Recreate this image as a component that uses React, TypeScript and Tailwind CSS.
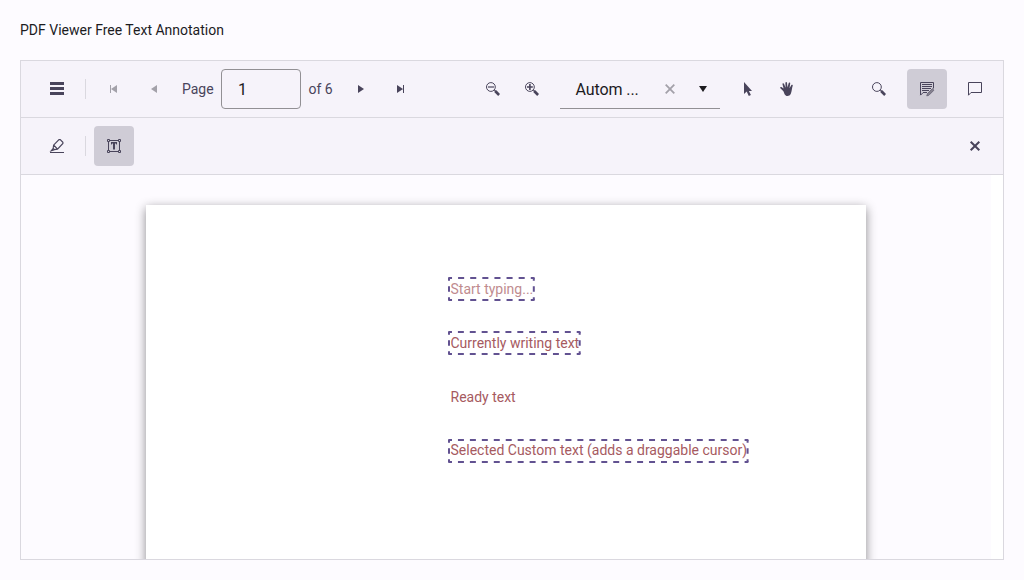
import type { ReactNode } from "react";

function Icon({ children }: { children: ReactNode }) {
  return (
    <svg viewBox="0 0 16 16" className="block size-4 shrink-0" fill="currentColor">
      {children}
    </svg>
  );
}

function ToolButton({ label, className = "", children }: { label: string; className?: string; children: ReactNode }) {
  return (
    <button
      type="button"
      aria-label={label}
      className={`flex size-10 shrink-0 items-center justify-center rounded ${className}`}
    >
      <Icon>{children}</Icon>
    </button>
  );
}

function Separator() {
  return <div className="mx-2 h-5 w-px shrink-0 bg-[#dad8df]" />;
}

function Lens({ children }: { children?: ReactNode }) {
  return (
    <>
      <circle cx="5.9" cy="6" r="4.4" fill="none" stroke="currentColor" strokeWidth="1" />
      <path d="M9 9.2l.8-.7 1 .9.6-.2 3.6 3.8-1.8 1.9-3.8-3.7.3-.7z" />
      {children}
    </>
  );
}

/* Dashed selection frame: a dash is centred on every corner of the box. */
function DashedFrame({ dashes }: { dashes: number }) {
  const side = { strokeDasharray: "6 6", strokeDashoffset: 3 };
  return (
    <svg className="pointer-events-none absolute -left-px -top-px h-[22px] w-[calc(100%+2px)] overflow-visible" stroke="#625291" strokeWidth="2">
      <line x1="0" y1="0" x2="100%" y2="0" pathLength={dashes * 12} {...side} />
      <line x1="0" y1="100%" x2="100%" y2="100%" pathLength={dashes * 12} {...side} />
      <line x1="0" y1="0" x2="0" y2="100%" pathLength={24} {...side} />
      <line x1="100%" y1="0" x2="100%" y2="100%" pathLength={24} {...side} />
      <g fill="#625291" stroke="none">
        <circle cx="0" cy="0" r="1" />
        <circle cx="100%" cy="0" r="1" />
        <circle cx="0" cy="100%" r="1" />
        <circle cx="100%" cy="100%" r="1" />
      </g>
    </svg>
  );
}

function Annotation({ text, className = "", dashes = 0, faded = false }: { text: string; className?: string; dashes?: number; faded?: boolean }) {
  return (
    <div className={`relative m-[2px] h-5 w-fit ${className}`}>
      <span className={`-mr-[0.5px] ml-[0.5px] block whitespace-nowrap text-[#a65a5f] ${faded ? "opacity-70" : ""}`}>{text}</span>
      {dashes > 0 && <DashedFrame dashes={dashes} />}
    </div>
  );
}

export default function App() {
  return (
    <div className="flex h-[580px] w-[1024px] flex-col overflow-hidden bg-[#fdfbff] px-5 pb-5 font-[Roboto,sans-serif] text-sm text-[#1c1b1f]">
      <div className="flex h-[60px] shrink-0 items-center leading-5">PDF Viewer Free Text Annotation</div>

      <div className="flex min-h-0 flex-1 flex-col overflow-hidden border border-[#dad8df]">
        <div className="flex h-[57px] shrink-0 items-center border-b border-[#dad8df] bg-[#f6f3fa] pl-4 pr-2 text-[#49445b]">
          <ToolButton label="Menu">
            <path d="M1 1h14v3H1zM1 6h14v3H1zM1 11h14v3H1z" />
          </ToolButton>
          <Separator />
          <ToolButton label="First page" className="text-[#a3a1a9]">
            <path d="M4 4h1v8H4zM11 4v8L5 8z" />
          </ToolButton>
          <ToolButton label="Previous page" className="text-[#a3a1a9]">
            <path d="M11 4v8L5 8z" />
          </ToolButton>
          <span className="w-[47px] pl-2">Page</span>
          <div className="flex h-10 w-20 items-center rounded border border-[#929094] px-4 pt-0.5 text-base text-[#1c1b1f]">1</div>
          <span className="w-10 pl-[7.5px]">of 6</span>
          <ToolButton label="Next page">
            <path d="M5 4v8l6-4z" />
          </ToolButton>
          <ToolButton label="Last page">
            <path d="M4 4v8l6-4zM10 4h1v8h-1z" />
          </ToolButton>

          <div className="ml-[52px] flex items-center">
            <ToolButton label="Zoom out">
              <Lens>
                <path d="M3 5.4h6v1.2H3z" />
              </Lens>
            </ToolButton>
            <ToolButton label="Zoom in" className="-ml-px">
              <Lens>
                <path d="M3 5.2h2.1V3h1.6v2.2h2.1v1.6H6.7V9H5.1V6.8H3z" />
              </Lens>
            </ToolButton>
            <div className="mx-2 flex h-10 w-40 items-center border-b border-[#929094] text-[#1c1b1f]">
              <span className="w-[102px] pl-[15.5px] pt-0.5 text-base tracking-[-0.1px]">Autom ...</span>
              <span className="text-[#a3a1a9]">
                <Icon>
                  <path d="M3.7 3.7l8.6 8.6M12.3 3.7l-8.6 8.6" stroke="currentColor" strokeWidth="1.8" />
                </Icon>
              </span>
              <span className="ml-[17px]">
                <Icon>
                  <path d="M4 5h8l-4 6z" />
                </Icon>
              </span>
            </div>
            <ToolButton label="Select">
              <path d="M4 1v12l2.7-2.4L8.8 15l2.1-1-2-4.1H12z" />
            </ToolButton>
            <ToolButton label="Pan" className="-ml-px">
              <path d="M4.4 10.2L1.4 7.3c-.8-.8.2-1.8 1-1.2l2.2 1.5L3.5 3.2c-.2-1 1.1-1.4 1.5-.4l1.6 4L6.4 1.9c0-1.1 1.5-1.2 1.6-.1l.5 4.8 1.2-4.5c.3-1 1.7-.7 1.5.4l-.7 4.8 1.9-3.2c.5-.8 1.7-.3 1.3.7-.8 2-.8 5.2-1.8 7.8-.8 2-2 2.4-3.5 2.4-2.5 0-3.1-2.8-4-4.8z" />
            </ToolButton>
          </div>

          <div className="ml-auto flex items-center gap-2">
            <ToolButton label="Search">
              <Lens />
            </ToolButton>
            <ToolButton label="Annotate" className="bg-[#cfccd6]">
              <path d="M1.5 14V1.5h13v6M1.5 14.2L4 11.7" fill="none" stroke="currentColor" />
              <path d="M3 3h10v1H3zM3 5h10v1H3zM3 7h9v1H3zM3 9h7v1H3zM4 11h4v1H4z" />
              <path d="M13.4 7.6L15 9.2l-5 5-2.3.8.7-2.4z" fill="#85818f" stroke="currentColor" strokeWidth=".5" />
            </ToolButton>
            <ToolButton label="Comments">
              <path d="M1.5 14.2V1.5h13v10H4z" fill="none" stroke="currentColor" />
            </ToolButton>
          </div>
        </div>

        <div className="flex h-[57px] shrink-0 items-center border-b border-[#dad8df] bg-[#f6f3fa] pl-4 pr-2 text-[#49445b]">
          <ToolButton label="Highlight">
            <path d="M1 14h14v1H1z" />
            <path d="M4.6 7.2L10 1.6h1.2l2.7 2.7v1.2l-5.4 5.6-3 .5-1.3-1.3zM4.2 10.3l-2 2.4 3.3-1.1M4.8 7.2L8.4 11" fill="none" stroke="currentColor" strokeWidth="1.15" />
          </ToolButton>
          <Separator />
          <ToolButton label="Free text" className="bg-[#cfccd6]">
            <path d="M4 2.5h8M4 13.5h8M2.5 4v8M13.5 4v8M1.5 1.5h2v2h-2zM12.5 1.5h2v2h-2zM1.5 12.5h2v2h-2zM12.5 12.5h2v2h-2z" fill="none" stroke="currentColor" />
            <path d="M5 4h6v2.5h-.7L9.8 5.4H9v6.1H7V5.4h-.8l-.5 1.1H5z" />
          </ToolButton>
          <ToolButton label="Close" className="ml-auto">
            <path d="M3.7 3.7l8.6 8.6M12.3 3.7l-8.6 8.6" stroke="currentColor" strokeWidth="2" />
          </ToolButton>
        </div>

        <div className="flex min-h-0 flex-1">
          <div className="flex flex-1 justify-center overflow-hidden pt-[30px]">
            <div className="flex h-[1000px] w-[720px] flex-col gap-[30px] bg-white pl-[302px] pt-[72px] shadow-[0_3px_10px_rgba(0,0,0,0.45)]">
              <Annotation text="Start typing..." dashes={7} faded className="leading-5" />
              <Annotation text="Currently writing text" dashes={11} className="leading-5" />
              <Annotation text="Ready text" className="leading-5" />
              <Annotation text="Selected Custom text (adds a draggable cursor)" dashes={25} className="leading-[18px]" />
            </div>
          </div>
          <div className="w-3 shrink-0 bg-white" />
        </div>
      </div>
    </div>
  );
}
